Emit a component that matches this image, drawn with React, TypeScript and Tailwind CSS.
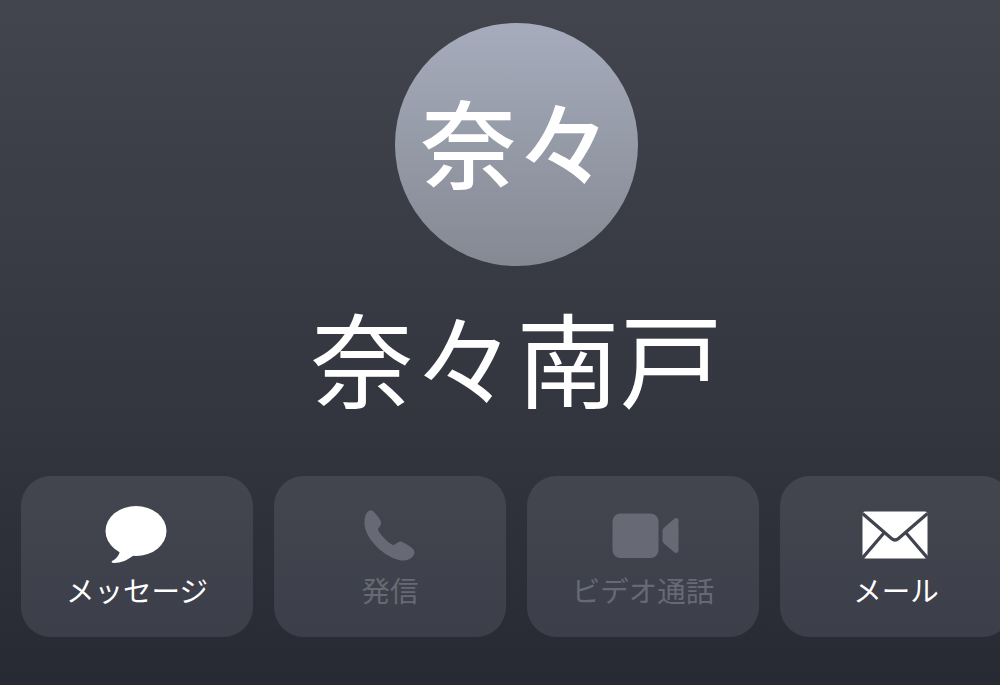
const font = { fontFamily: '"Noto Sans CJK JP", "Noto Sans", sans-serif' };

function Bubble() {
  return (
    <svg width="64" height="60" viewBox="0 0 64 60" className="block -translate-x-[1px]">
      <ellipse cx="32" cy="26" rx="30.5" ry="25" fill="#fff" />
      <path d="M16 44 C16 50 12 54 8 56 C7 57 8 58 10 58 C17 58 24 55 30 50 Z" fill="#fff" />
    </svg>
  );
}

function Phone() {
  return (
    <svg width="54" height="54" viewBox="0 0 54 54" className="mb-[3px] block">
      <path
        d="M4 4.500 C6 2 9 2 11 4 C14 7 17 11 18 14 C19 17 16 19 15 21 C15 23 18 27 22 31 C26 35 29 37 31 37 C33 36 35 33 38 33.500 C42 35 47 38 50 41 C52 43 52 46 50 48 C47 52 43 53 38 52.500 C30 51 21 46 14 39 C7 32 2 24 1.500 16 C1.300 11 2 7 4 4.500 Z"
        fill="#676a74"
      />
    </svg>
  );
}

function Video() {
  return (
    <svg width="68" height="46" viewBox="0 0 68 46" className="mb-[6px] ml-[6px] block">
      <rect x="0.500" y="0.500" width="46" height="44.500" rx="8" fill="#676a74" />
      <path d="M50.500 18 C50.500 16.500 51 15.500 52 14.700 L62 6 C64.500 4 66.500 5 66.500 8 L66.500 37 C66.500 40 64.500 41 62 39 L52 30.500 C51 29.700 50.500 28.700 50.500 27.500 Z" fill="#676a74" />
    </svg>
  );
}

function Mail() {
  return (
    <svg width="66" height="48" viewBox="0 0 66 48" className="mb-[6px] block -translate-x-[1px]">
      <rect x="0.500" y="0.500" width="65" height="47" rx="2.500" fill="#fff" />
      <path
        d="M0.500 2.500 L29.500 27.500 Q33 30.500 36.500 27.500 L65.500 2.500 M0.500 47 L21.500 22.500 M65.500 47 L44.500 22.500"
        fill="none"
        stroke="#41434e"
        strokeWidth="3.200"
        strokeLinejoin="round"
      />
    </svg>
  );
}

function Action({ icon, label, dim }: { icon: React.ReactNode; label: string; dim?: boolean }) {
  return (
    <div className="flex h-[161px] w-[232px] shrink-0 flex-col items-center rounded-[30px] bg-gradient-to-b from-[#43454f] to-[#3c3e49]">
      <div className="flex h-[90px] w-full items-end justify-center pb-[1px]">{icon}</div>
      <div
        className={`mt-[2px] text-[28.500px] leading-[44px] whitespace-nowrap ${dim ? "text-[#676a74]" : "text-white"}`}
        style={font}
      >
        {label}
      </div>
    </div>
  );
}

export default function App() {
  return (
    <div className="h-[685px] w-[1000px] overflow-hidden bg-gradient-to-b from-[#43454e] via-[#33353f] via-60% to-[#282a33]">
      <div className="flex w-[1033px] flex-col items-center pt-[23px]" style={font}>
        <div className="flex h-[243px] w-[243px] items-center justify-center rounded-full bg-gradient-to-b from-[#a6acbc] to-[#858993]">
          <span className="-mt-[10px] text-[96px] leading-none font-medium whitespace-nowrap text-white">奈々</span>
        </div>
        <div className="mt-[18px] text-[103px] leading-[146px] whitespace-nowrap text-white">奈々南戸</div>
        <div className="mt-[46px] flex w-full gap-[21px] pl-[21px]">
          <Action icon={<Bubble />} label="メッセージ" />
          <Action icon={<Phone />} label="発信" dim />
          <Action icon={<Video />} label="ビデオ通話" dim />
          <Action icon={<Mail />} label="メール" />
        </div>
      </div>
    </div>
  );
}
